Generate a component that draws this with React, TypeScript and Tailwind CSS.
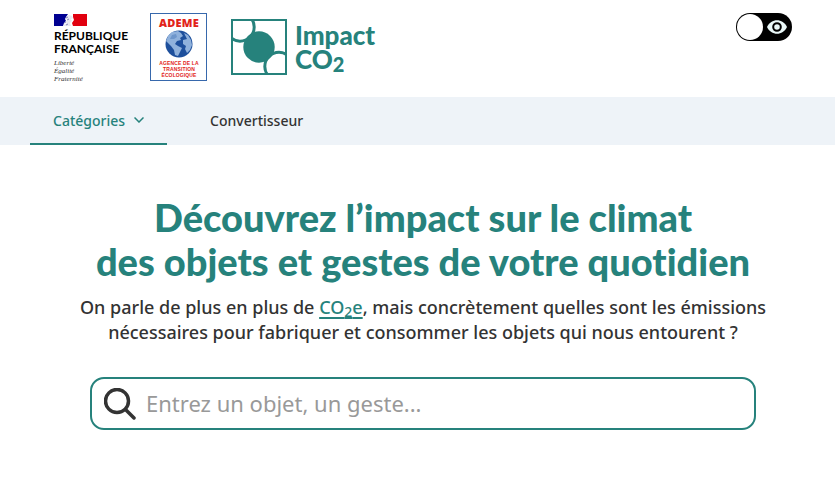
import { useState } from "react";

function RepubliqueLogo() {
  return (
    <div className="w-18 text-black">
      <svg viewBox="0 0 33 12" className="mt-px block h-3 w-[33px]" aria-hidden="true">
        <path d="M0 0H14L12 3L11 5L12 7L10 9L9 12H0Z" fill="#000091" />
        <path d="M19 0H33V12H19L18 9L20 6L19 3Z" fill="#e1000f" />
        <path d="M13 2L15 1L18 2L19 4L17 5L18 7L16 9L17 12H9L11 10L13 9L11 8L14 6L12 5Z" fill="#e9e9f1" />
        <path d="M12 4L14 3M13 6L15 5M10 9L12 8M12 11L14 10" stroke="#6c6ca8" strokeWidth=".8" />
      </svg>
      <p className="mt-[3px] font-['Lato',sans-serif] text-[12px] leading-[13px] font-bold">
        RÉPUBLIQUE
        <br />
        FRANÇAISE
      </p>
      <p className="mt-1 font-['Liberation_Serif',serif] text-[7px] leading-2 text-[#333] italic">
        Liberté
        <br />
        Égalité
        <br />
        Fraternité
      </p>
    </div>
  );
}

function AdemeLogo() {
  return (
    <div className="flex h-[68px] w-[57px] flex-col items-center border border-[#3768ac] pt-[3px] text-[#e2231a]">
      <span className="pl-px font-['Open_Sans',sans-serif] text-[11px] leading-3 font-extrabold tracking-wide">ADEME</span>
      <svg viewBox="0 0 28 28" className="mt-px block size-7" aria-hidden="true">
        <circle cx="14" cy="14" r="13.5" fill="#1d4f9c" />
        <path d="M3 6L7 2L13 1L16 3L18 6L15 8L16 10L12 11L10 14L13 16L17 18L15 22L13 26L10 25L9 20L6 16L3 13L1 11Z" fill="#8fb1dc" />
        <path d="M19 3L23 5L26 10L27 15L25 20L22 23L20 19L21 16L18 14L18 10L22 9Z" fill="#8fb1dc" />
        <path d="M7 5L11 4L12 7L9 9L5 9Z" fill="#6e96cb" />
      </svg>
      <p className="mt-0.5 pl-px text-center font-['Liberation_Sans',sans-serif] text-[5px] leading-[6px] font-bold tracking-wide">
        AGENCE DE LA
        <br />
        TRANSITION
        <br />
        ÉCOLOGIQUE
      </p>
    </div>
  );
}

function ImpactLogo() {
  return (
    <a href="#accueil" className="flex items-center gap-2 text-[#26827c]">
      <svg viewBox="0 0 56 56" className="block size-14" fill="none" stroke="currentColor" aria-hidden="true">
        <clipPath id="logo-frame">
          <rect x="1" y="1" width="54" height="54" />
        </clipPath>
        <circle cx="28" cy="28" r="15.7" fill="currentColor" stroke="none" />
        <g clipPath="url(#logo-frame)" strokeWidth="3">
          <circle cx="9" cy="8" r="14.2" />
          <circle cx="48" cy="47.500" r="14.2" />
        </g>
        <rect x="1" y="1" width="54" height="54" strokeWidth="2" />
      </svg>
      <span className="block pt-0.5 font-['Lato',sans-serif] text-[26px] leading-6 font-black">
        Impact
        <br />
        CO<sub className="bottom-0 align-[-3px] text-[20px] leading-none">2</sub>
      </span>
    </a>
  );
}

function DisplaySwitch() {
  const [on, setOn] = useState(false);
  return (
    <button
      type="button"
      role="switch"
      aria-checked={on}
      aria-label="Affichage"
      onClick={() => setOn(!on)}
      className={`flex h-7 w-14 items-center justify-between rounded-full bg-black pr-[5px] pl-px ${on ? "flex-row-reverse" : ""}`}
    >
      <span className="size-[26px] rounded-full bg-white" />
      <svg viewBox="0 0 20 14" className="h-3.5 w-5" aria-hidden="true">
        <path d="M0 7C4-2 16-2 20 7C16 16 4 16 0 7Z" fill="#e9f7f7" />
        <circle cx="10" cy="7" r="3.8" fill="none" stroke="#000" strokeWidth="2" />
      </svg>
    </button>
  );
}

export default function App() {
  return (
    <div className="bg-white font-['Noto_Sans',sans-serif] text-[#333]">
      <header className="flex items-start justify-between pt-[13px] pr-[43px] pb-3.5 pl-[54px]">
        <div className="flex items-start gap-6">
          <RepubliqueLogo />
          <AdemeLogo />
          <div className="pt-1.5">
            <ImpactLogo />
          </div>
        </div>
        <DisplaySwitch />
      </header>

      <nav className="flex h-12 gap-5 bg-[#eef3f8] pl-[30px] text-[14px] font-medium">
        <button type="button" className="flex items-center gap-[9px] border-b-2 border-[#26827c] px-[23px] text-[#26827c]">
          Catégories
          <svg viewBox="0 0 10 6" className="h-1.5 w-2.5" fill="none" stroke="currentColor" strokeWidth="1.5" aria-hidden="true">
            <path d="M.5 .5L5 5L9.500 .5" />
          </svg>
        </button>
        <a href="#convertisseur" className="flex items-center border-b-2 border-transparent px-[23px]">
          Convertisseur
        </a>
      </nav>

      <main className="pt-[50px] pr-[69px] pb-12 pl-20 text-center">
        <h1 className="font-['Lato',sans-serif] text-[38px] leading-11 font-black whitespace-nowrap text-[#26827c] [font-variant-ligatures:none]">
          Découvrez l’impact sur le climat
          <br />
          des objets et gestes de votre quotidien
        </h1>
        <p className="mt-3 text-[18px] leading-[25px] font-medium whitespace-nowrap">
          On parle de plus en plus de{" "}
          <a href="#co2e" className="text-[#26827c] underline decoration-2 underline-offset-3">
            CO<sub className="bottom-0 align-[-3px] text-[14px] leading-none">2</sub>e
          </a>
          , mais concrètement quelles sont les émissions
          <br />
          nécessaires pour fabriquer et consommer les objets qui nous entourent ?
        </p>
        <label className="mx-[10px] mt-8 flex h-[53px] items-center gap-2.5 rounded-[14px] border-2 border-[#26827c] px-3">
          <svg viewBox="0 0 32 32" className="size-8 shrink-0" fill="none" stroke="#333" strokeWidth="3.500" strokeLinecap="round" aria-hidden="true">
            <circle cx="13" cy="13" r="11.500" />
            <path d="M21.500 21.500L30 30" />
          </svg>
          <input
            type="text"
            aria-label="Rechercher un objet ou un geste"
            placeholder="Entrez un objet, un geste..."
            className="min-w-0 flex-1 bg-transparent text-[22px] outline-none placeholder:text-[#999]"
          />
        </label>
      </main>
    </div>
  );
}
